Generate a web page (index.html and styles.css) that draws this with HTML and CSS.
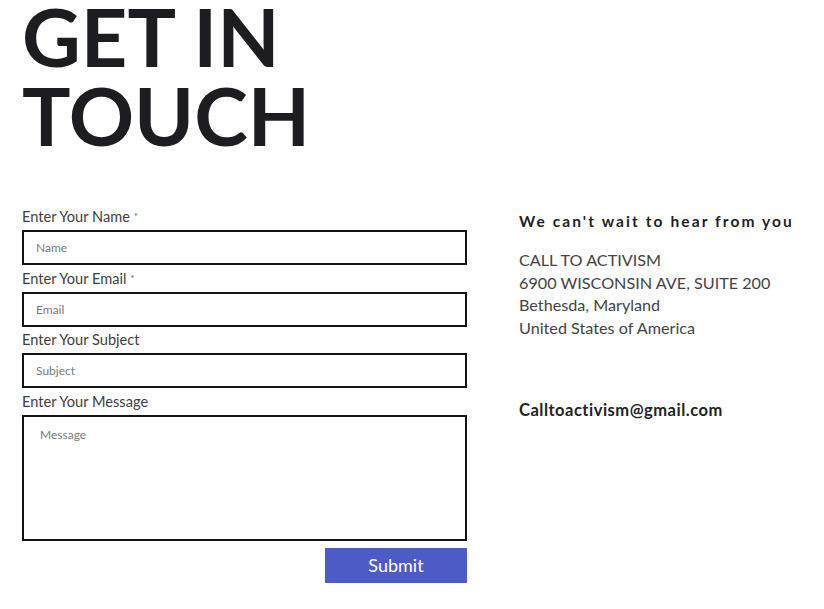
FILE: index.html
```html
<!DOCTYPE html>
<html lang="en">
<head>
<meta charset="utf-8">
<title>Get in Touch</title>
<link rel="stylesheet" href="styles.css">
</head>
<body>
<main class="page">
  <h1 class="title">GET IN<br>TOUCH</h1>
  <div class="columns">
    <form class="form">
      <label class="label">Enter Your Name <span class="req">*</span></label>
      <div class="field"><span class="ph">Name</span></div>
      <label class="label">Enter Your Email <span class="req">*</span></label>
      <div class="field"><span class="ph">Email</span></div>
      <label class="label">Enter Your Subject</label>
      <div class="field"><span class="ph">Subject</span></div>
      <label class="label">Enter Your Message</label>
      <div class="field area"><span class="ph">Message</span></div>
      <div class="actions"><button type="button" class="submit">Submit</button></div>
    </form>
    <aside class="info">
      <h2 class="info-title">We can't wait to hear from you</h2>
      <p class="address">CALL TO ACTIVISM<br>6900 WISCONSIN AVE, SUITE 200<br>Bethesda, Maryland<br>United States of America</p>
      <p class="email">Calltoactivism@gmail.com</p>
    </aside>
  </div>
</main>
</body>
</html>
```
FILE: styles.css
```css
* { box-sizing: border-box; }
html, body { margin: 0; background: #fff; }
body { font-family: Lato, "Open Sans", sans-serif; color: #1f1f23; }
.page { padding: 0 0 0 22px; }
.title {
  margin: -4px 0 0;
  font-family: Lato, sans-serif;
  font-weight: 700;
  font-size: 81px;
  line-height: 79px;
  color: #1d1d21;
}
.columns { display: flex; gap: 52px; margin-top: 53px; }
.form { width: 445px; display: flex; flex-direction: column; }
.label { font-size: 14.6px; line-height: 19px; color: #3f3f3f; margin-bottom: 4px; }
.req { font-size: 10px; vertical-align: top; color: #666; }
.field {
  height: 35px;
  border: 2px solid #141414;
  padding: 0 12px;
  display: flex;
  align-items: center;
  margin-bottom: 3.6px;
}
.ph { font-size: 12px; color: #7a7a7a; }
.field.area { height: 126px; align-items: flex-start; padding: 10px 16px; }
.actions { display: flex; justify-content: flex-end; margin-top: 3.4px; }
.submit {
  width: 142px; height: 35px; border: 0; background: #4c5bc5; color: #fff;
  font-family: Lato, sans-serif; font-size: 18px; padding: 0;
}
.info { width: 300px; padding-top: 4px; }
.info-title { margin: 0; font-size: 15.5px; font-weight: 700; letter-spacing: 2.1px; color: #1f1f23; line-height: 20px; }
.address { margin: 18px 0 0; font-size: 16.2px; line-height: 22.7px; color: #444; }
.email { margin: 60px 0 0; font-size: 16.5px; font-weight: 700; letter-spacing: 0.5px; color: #222; }
```
